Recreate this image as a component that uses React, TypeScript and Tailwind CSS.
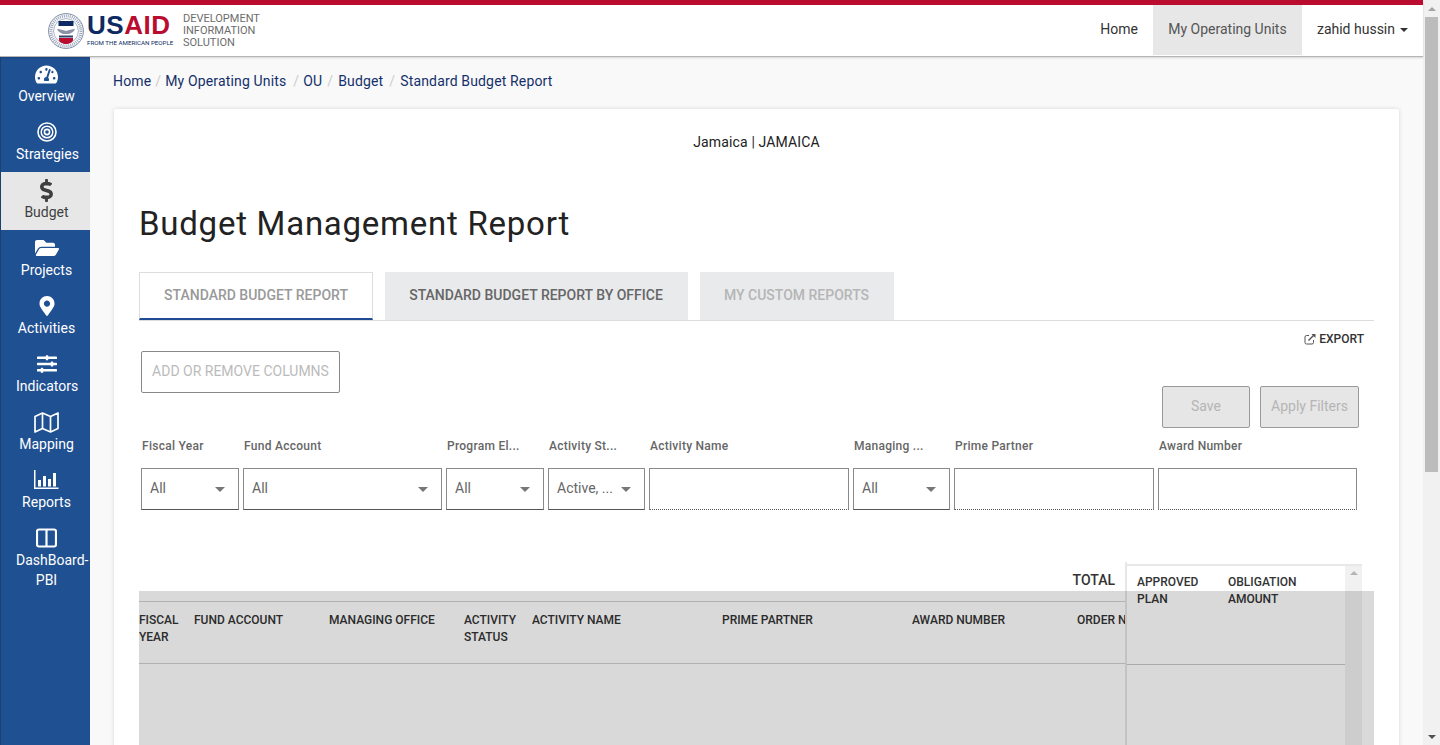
import { FaTachometerAlt, FaFolderOpen, FaMapMarkerAlt, FaSlidersH, FaDollarSign } from "react-icons/fa";
import type { ReactNode } from "react";

const Bullseye = () => (
  <svg width="20" height="20" viewBox="0 0 20 20" fill="none" stroke="currentColor">
    <circle cx="10" cy="10" r="9" strokeWidth="1.6" />
    <circle cx="10" cy="10" r="5.8" strokeWidth="1.5" />
    <circle cx="10" cy="10" r="2.6" strokeWidth="1.6" />
  </svg>
);

const MapIcon = () => (
  <svg width="25" height="23" viewBox="0 0 25 23" fill="none" stroke="currentColor" strokeWidth="1.7" strokeLinejoin="round">
    <path d="M1 5.5 8.5 2l8 3.5L24 2v15.5L16.5 21l-8-3.5L1 21z" />
    <path d="M8.5 2v15.5M16.5 5.5V21" />
  </svg>
);

const ReportsIcon = () => (
  <svg width="25" height="20" viewBox="0 0 25 20" fill="currentColor">
    <rect x="0" y="0" width="1.5" height="19" />
    <rect x="0" y="17.5" width="24.5" height="1.5" />
    <rect x="4" y="10" width="3" height="6.5" />
    <rect x="9" y="6" width="3" height="10.5" />
    <rect x="14" y="9" width="3" height="7.5" />
    <rect x="19" y="3" width="3" height="13.5" />
  </svg>
);

const ColumnsIcon = () => (
  <svg width="21" height="20" viewBox="0 0 21 20" fill="none" stroke="currentColor" strokeWidth="2.2">
    <rect x="1" y="1.5" width="19" height="17" rx="2" />
    <path d="M10.5 1.5v17" />
  </svg>
);

const navItems: { label: ReactNode; icon: ReactNode; active?: boolean }[] = [
  { label: "Overview", icon: <FaTachometerAlt size={23} /> },
  { label: "Strategies", icon: <Bullseye /> },
  { label: "Budget", icon: <FaDollarSign size={23} />, active: true },
  { label: "Projects", icon: <FaFolderOpen size={24} /> },
  { label: "Activities", icon: <FaMapMarkerAlt size={20} /> },
  { label: "Indicators", icon: <FaSlidersH size={20} /> },
  { label: "Mapping", icon: <MapIcon /> },
  { label: "Reports", icon: <ReportsIcon /> },
  { label: <>DashBoard-<br />PBI</>, icon: <ColumnsIcon /> },
];

const Seal = () => (
  <svg width="36" height="36" viewBox="0 0 36 36" className="shrink-0">
    <circle cx="18" cy="18" r="17.4" fill="#fff" stroke="#7d8aa5" strokeWidth="1" />
    <circle cx="18" cy="18" r="15" fill="none" stroke="#9aa5bb" strokeWidth="3" strokeDasharray="1 1" />
    <circle cx="18" cy="18" r="12.4" fill="#fff" stroke="#6f7f9e" strokeWidth="0.6" />
    <rect x="10.5" y="8" width="15" height="5" fill="#0d2a63" />
    <path d="M9 16c3 0 6 1 9 2 3-1 6-2 9-2-1 3-4 4-6 5h-6c-2-1-5-2-6-5z" fill="#8a93a6" />
    <rect x="11" y="22.5" width="14" height="2" fill="#31476f" />
    <path d="M11 25h14v2c0 2-4 4-7 4s-7-2-7-4z" fill="#ba0c2f" />
  </svg>
);

const Logo = () => (
  <div className="flex items-center ml-[48px]">
    <Seal />
    <div className="ml-[3px] flex flex-col w-[85px]">
      <span className="font-['Liberation_Sans'] font-bold text-[26px] leading-[23px] tracking-[0.5px] whitespace-nowrap">
        <span className="text-[#0d2a63]">US</span>
        <span className="text-[#ba0c2f]">AID</span>
      </span>
      <span className="text-[6.2px] leading-[8px] mt-[2px] whitespace-nowrap text-[#0d2a63]">FROM THE AMERICAN PEOPLE</span>
    </div>
    <div className="ml-[11px] text-[11px] leading-[12px] text-[#6c6c6c]">
      DEVELOPMENT<br />INFORMATION<br />SOLUTION
    </div>
  </div>
);

const Header = () => (
  <div className="shrink-0 relative z-10 bg-white border-t-[5px] border-[#ba0c2f] h-[57px] -mb-[1px] border-b border-b-[#b5b5b5] shadow-[0_1px_2px_rgba(0,0,0,0.15)] flex items-start justify-between">
    <div className="h-[51px] flex items-center"><Logo /></div>
    <div className="flex items-center text-[14px] h-[50px] text-[#333]">
      <span className="px-[15px] h-full flex items-center pb-[2px]">Home</span>
      <span className="w-[149px] justify-center bg-[#e7e7e7] h-full flex items-center pb-[2px] text-[#555]">My Operating Units</span>
      <span className="pl-[15px] pr-[15px] h-full flex items-center pb-[2px]">
        zahid hussin
        <span className="ml-[5px] mt-[2px] border-x-[4px] border-x-transparent border-t-[4px] border-t-[#333]" />
      </span>
    </div>
  </div>
);

const Sidebar = () => (
  <div className="w-[90px] shrink-0 bg-[#1f5091] border-l border-l-[#1a4170] text-white text-[14px]">
    {navItems.map((item, i) => (
      <div
        key={i}
        className={`h-[58px] pl-[15px] pt-[6px] ${item.active ? "bg-[#e7e7e7] text-[#3f3f3f]" : ""}`}
      >
        <div className="w-[61px] h-[24px] flex items-center justify-center">{item.icon}</div>
        <div className="w-[61px] text-center leading-[20px] whitespace-nowrap">{item.label}</div>
      </div>
    ))}
  </div>
);

const Select = ({ w, value }: { w: string; value: string }) => (
  <div className={`${w} h-[42px] border border-[#8a8a8a] border-b-[#555] bg-white flex items-center justify-between pl-[8px] pr-[13px] text-[14px] text-[#666]`}>
    <span className="pb-[2px]">{value}</span>
    <span className="border-x-[5px] border-x-transparent border-t-[5px] border-t-[#777]" />
  </div>
);

const Input = ({ w }: { w: string }) => (
  <div className={`${w} h-[42px] border border-[#8a8a8a] [border-bottom-style:dotted] border-b-[#555] bg-white`} />
);

const labels: [string, string][] = [
  ["w-[98px]", "Fiscal Year"],
  ["w-[199px]", "Fund Account"],
  ["w-[98px]", "Program El..."],
  ["w-[97px]", "Activity St..."],
  ["w-[200px]", "Activity Name"],
  ["w-[97px]", "Managing ..."],
  ["w-[200px]", "Prime Partner"],
  ["w-[199px]", "Award Number"],
];

const columns: [string, ReactNode][] = [
  ["w-[55px]", <>FISCAL<br />YEAR</>],
  ["w-[135px]", "FUND ACCOUNT"],
  ["w-[135px]", "MANAGING OFFICE"],
  ["w-[68px]", <>ACTIVITY<br />STATUS</>],
  ["w-[190px]", "ACTIVITY NAME"],
  ["w-[190px]", "PRIME PARTNER"],
  ["w-[165px]", "AWARD NUMBER"],
  ["w-[49px]", "ORDER NUMBER"],
];

const Tabs = () => (
  <div className="flex gap-[12px] h-[49px] border-b border-[#ddd] text-[14px] font-medium">
    <div className="w-[234px] h-[48px] bg-white border border-[#ddd] border-b-2 border-b-[#1f4a94] flex items-center justify-center text-[#999]">STANDARD BUDGET REPORT</div>
    <div className="w-[303px] h-[48px] bg-[#e9eaec] flex items-center justify-center pb-[2px] pr-[1px] text-[#666]">STANDARD BUDGET REPORT BY OFFICE</div>
    <div className="w-[194px] h-[48px] bg-[#e9eaec] flex items-center justify-center pb-[2px] pr-[1px] text-[#b5b5b5]">MY CUSTOM REPORTS</div>
  </div>
);

const ExportIcon = () => (
  <svg width="12" height="12" viewBox="0 0 12 12" fill="none" stroke="#555" strokeWidth="1">
    <path d="M9.5 7v2.5a1.5 1.5 0 0 1-1.5 1.5H2.5A1.5 1.5 0 0 1 1 9.5V4a1.5 1.5 0 0 1 1.5-1.5H5" />
    <path d="M4.5 7.5 10 2" strokeWidth="1.4" />
    <path d="M7.5 1h4v4z" fill="#555" stroke="none" />
  </svg>
);

const Report = () => (
  <div className="relative">
    <div className="flex h-[200px]">
      <div className="flex-1 min-w-0 overflow-hidden">
        <div className="h-[39px] text-right pr-[10px] pt-[8px] font-medium text-[14px] leading-[20px] text-[#333]">TOTAL</div>
        <div className="h-[63px] border-y border-[#d0d0d0] flex items-start pt-[10px] text-[12px] font-medium leading-[17px] text-[#333] whitespace-nowrap">
          {columns.map(([w, c], i) => (
            <div key={i} className={`${w} shrink-0 overflow-hidden`}>{c}</div>
          ))}
        </div>
      </div>
      <div className="w-[237px] shrink-0 border-l-2 border-l-[#e6e6e6] mr-[12px] flex">
        <div className="flex-1 mt-[2px] border-t-2 border-[#e8e8e8]">
          <div className="h-[99px] border-b border-[#c8c8c8] flex pt-[8px] pl-[10px] text-[12px] font-medium leading-[17px] text-[#333]">
            <div className="w-[91px]">APPROVED<br />PLAN</div>
            <div>OBLIGATION<br />AMOUNT</div>
          </div>
        </div>
        <div className="w-[17px] shrink-0 mt-[2px] bg-[#f1f1f1] border-t-2 border-[#e8e8e8] flex justify-center pt-[5px]">
          <span className="h-0 border-x-[4px] border-x-transparent border-b-[4px] border-b-[#b5b5b5]" />
        </div>
      </div>
    </div>
    <div className="absolute left-0 right-0 top-[29px] bottom-0 bg-black/15" />
  </div>
);

const App = () => (
  <div className="h-[745px] w-[1440px] overflow-hidden flex font-['Roboto',sans-serif] bg-[#f9f9f9]">
    <div className="flex-1 min-w-0 flex flex-col">
      <Header />
      <div className="flex-1 min-h-0 flex overflow-hidden">
        <Sidebar />
        <div className="flex-1 min-w-0 pl-[23px] pr-[24px] pt-[16px]">
          <div className="flex items-center text-[14px] h-[18px] text-[#14306b] tracking-[0.15px]">
            <span>Home</span><span className="text-[#ccc] px-[4px]">/</span>
            <span>My Operating Units</span><span className="text-[#ccc] pl-[7px] pr-[4px]">/</span>
            <span>OU</span><span className="text-[#ccc] px-[5px]">/</span>
            <span>Budget</span><span className="text-[#ccc] pl-[6px] pr-[5px]">/</span>
            <span>Standard Budget Report</span>
          </div>
          <div className="mt-[19px] ml-[1px] bg-white shadow-[0_0_4px_rgba(0,0,0,0.15)] rounded-[2px] px-[25px] h-[700px]">
            <div className="pt-[25px] text-center text-[14px] leading-[16px] text-[#222] tracking-[0.15px]">Jamaica | JAMAICA</div>
            <h1 className="mt-[55px] text-[33px] leading-[38px] text-[#222] tracking-[0.75px]">Budget Management Report</h1>
            <div className="mt-[29px]"><Tabs /></div>
            <div className="flex justify-end items-center gap-[3px] pr-[10px] mt-[11px] h-[14px] text-[12px] font-medium text-[#333]">
              <ExportIcon />EXPORT
            </div>
            <div className="ml-[2px] mt-[5px] w-[199px] h-[42px] border border-[#888] rounded-[2px] flex items-center justify-center pb-[2px] text-[14px] text-[#bbb]">ADD OR REMOVE COLUMNS</div>
            <div className="flex justify-end gap-[10px] pr-[15px] -mt-[7px]">
              <div className="w-[88px] h-[42px] bg-[#e6e6e6] border border-[#999] rounded-[2px] flex items-center justify-center pb-[2px] text-[14px] text-[#b5b5b5]">Save</div>
              <div className="w-[99px] h-[42px] bg-[#e6e6e6] border border-[#999] rounded-[2px] flex items-center justify-center pb-[2px] text-[14px] text-[#b5b5b5]">Apply Filters</div>
            </div>
            <div className="flex gap-[4px] ml-[2px] mt-[10px] text-[12px] font-medium text-[#666] leading-[16px] tracking-[0.27px] whitespace-nowrap">
              {labels.map(([w, l]) => (
                <div key={l} className={`${w} pl-[1px]`}>{l}</div>
              ))}
            </div>
            <div className="flex gap-[4px] ml-[2px] mt-[14px]">
              <Select w="w-[98px]" value="All" />
              <Select w="w-[199px]" value="All" />
              <Select w="w-[98px]" value="All" />
              <Select w="w-[97px]" value="Active, ..." />
              <Input w="w-[200px]" />
              <Select w="w-[97px]" value="All" />
              <Input w="w-[200px]" />
              <Input w="w-[199px]" />
            </div>
            <div className="mt-[52px]"><Report /></div>
          </div>
        </div>
      </div>
    </div>
    <div className="w-[17px] shrink-0 bg-[#f1f1f1] flex flex-col items-center justify-between">
      <div className="w-full flex flex-col items-center">
        <div className="h-[17px] flex items-center justify-center">
          <span className="border-x-[4px] border-x-transparent border-b-[4px] border-b-[#a3a3a3]" />
        </div>
        <div className="w-[13px] h-[455px] bg-[#bcbcbc]" />
      </div>
      <div className="h-[17px] flex items-center justify-center">
        <span className="border-x-[4px] border-x-transparent border-t-[4px] border-t-[#505050]" />
      </div>
    </div>
  </div>
);

export default App;
